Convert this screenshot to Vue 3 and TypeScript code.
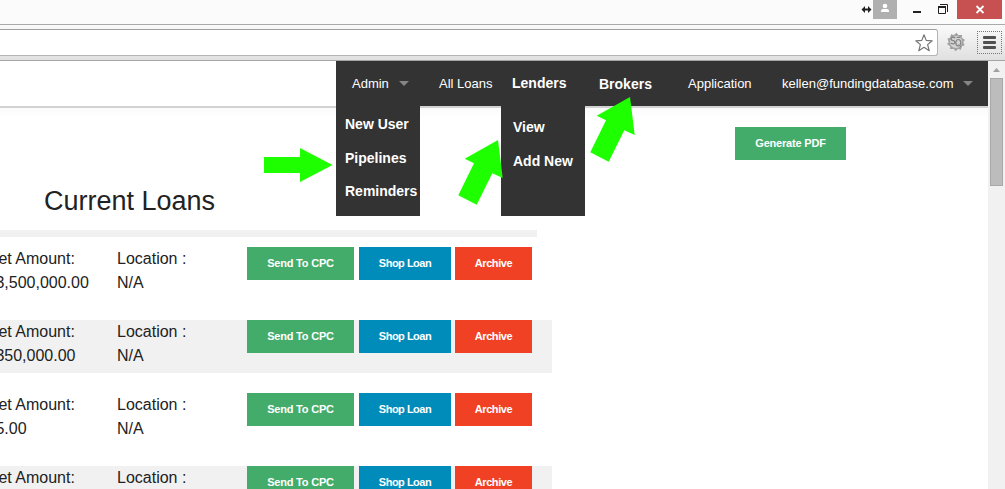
<script setup lang="ts">
interface NavItem { label: string; bold?: boolean; caret?: boolean }
interface Loan { amount: string; shaded: boolean }

const nav: NavItem[] = [
  { label: 'Admin', caret: true },
  { label: 'All Loans' },
  { label: 'Lenders', bold: true },
  { label: 'Brokers', bold: true },
  { label: 'Application' },
  { label: 'kellen@fundingdatabase.com', caret: true },
]
const adminMenu: string[] = ['New User', 'Pipelines', 'Reminders']
const lenderMenu: string[] = ['View', 'Add New']
const loans: Loan[] = [
  { amount: '3,500,000.00', shaded: false },
  { amount: '350,000.00', shaded: true },
  { amount: '5.00', shaded: false },
  { amount: '', shaded: true },
]
const gearTeeth: number[] = [0, 36, 72, 108, 144, 180, 216, 252, 288, 324]
</script>

<template>
  <div class="window">
    <div class="titlebar">
      <svg class="resize" width="12" height="9" viewBox="0 0 12 9"><path d="M2 4.500H9" fill="none" stroke="#222" stroke-width="2" /><path d="M0.500 4.500L4 1V8ZM10.500 4.500L7 1V8Z" fill="#222" /></svg>
      <div class="profile">
        <svg width="24" height="19" viewBox="0 0 24 19"><circle cx="12" cy="6" r="2.300" fill="#fff" /><path d="M8 12V10.800Q8 9 10 9H14Q16 9 16 10.800V12Z" fill="#fff" /></svg>
      </div>
      <svg class="controls" width="60" height="19" viewBox="0 0 60 19">
        <path d="M16 12H24" stroke="#222" stroke-width="2" />
        <path d="M43 4.500H50.500V12" fill="none" stroke="#222" />
        <path d="M41.500 6.500H48.500V13.500H41.500Z" fill="none" stroke="#222" />
        <path d="M41 7H49" stroke="#222" stroke-width="2" />
      </svg>
      <div class="close">
        <svg width="45" height="19" viewBox="0 0 45 19"><path d="M19.500 6L26.500 13M26.500 6L19.500 13" stroke="#fff" stroke-width="1.800" /></svg>
      </div>
    </div>

    <div class="toolbar">
      <div class="omnibox">
        <svg width="20" height="20" viewBox="0 0 20 20"><path d="M10 1.800L12.200 7.400L18.200 7.800L13.600 11.600L15.200 17.700L10 14.300L4.800 17.700L6.400 11.600L1.800 7.800L7.800 7.400Z" fill="#fff" stroke="#777" stroke-width="1.200" stroke-linejoin="round" /></svg>
      </div>
      <svg class="extension" width="20" height="20" viewBox="0 0 20 20">
        <path v-for="t in gearTeeth" :key="t" d="M7 3.500L10.800 0.800L12.500 4Z" fill="#a0a0a0" :transform="`rotate(${t} 10 10)`" />
        <circle cx="10" cy="10" r="6.500" fill="#d4d4d4" stroke="#a0a0a0" />
        <path d="M9.200 6.200Q8 4.800 6 5.500Q4.300 6.800 5.800 8.200Q9.200 9 9 10.800Q8 12.600 4.800 11.200" fill="none" stroke="#858585" stroke-width="1.300" />
        <ellipse cx="12.300" cy="10.700" rx="2.500" ry="3.200" fill="none" stroke="#858585" stroke-width="1.200" />
        <path d="M12.500 12.500L15 15M10.500 5.500H14" stroke="#858585" />
      </svg>
      <div class="menu-button"><i></i><i></i><i></i></div>
    </div>

    <div class="viewport">
      <main class="page">
        <header class="header">
          <nav class="nav">
            <a v-for="item in nav" :key="item.label" :class="{ bold: item.bold }">
              {{ item.label }}<span v-if="item.caret" class="caret"></span>
            </a>
            <div class="dropdown admin"><a v-for="m in adminMenu" :key="m">{{ m }}</a></div>
            <div class="dropdown lenders"><a v-for="m in lenderMenu" :key="m">{{ m }}</a></div>
          </nav>
        </header>

        <div class="content">
          <section class="loans">
            <h1>Current Loans</h1>
            <div class="divider"></div>
            <div v-for="(loan, i) in loans" :key="i" class="loan" :class="{ shaded: loan.shaded }">
              <div class="amount"><div class="label">et Amount:</div><div v-if="loan.amount" class="value">{{ loan.amount }}</div></div>
              <div class="location"><div>Location :</div><div v-if="loan.amount">N/A</div></div>
              <div class="actions">
                <button class="btn green send">Send To CPC</button>
                <button class="btn blue shop">Shop Loan</button>
                <button class="btn red archive">Archive</button>
              </div>
            </div>
          </section>
          <button class="btn green pdf">Generate PDF</button>
        </div>
      </main>

      <div class="scrollbar">
        <svg width="17" height="17" viewBox="0 0 17 17"><path d="M5 11L8.500 7L12 11Z" fill="#a0a0a0" /></svg>
        <div class="thumb"></div>
      </div>
    </div>

    <svg class="arrows" width="1005" height="489" viewBox="0 0 1005 489" fill="#1eff00">
      <path d="M264 157H300V148L332.500 165L300 182V173H264Z" />
      <path d="M498 140L502.700 178L492.300 173.300L476.700 204.700L458.300 195.300L474 163.300L464.700 158.700Z" />
      <path d="M630 97L634.700 135L624.300 130.300L608.700 161.700L590.300 152.300L606 120.300L596.700 115.700Z" />
    </svg>
  </div>
</template>

<style>
html, body { overflow: hidden; }
</style>

<style scoped>
* { box-sizing: border-box; }
.window { position: relative; width: 1005px; height: 489px; overflow: hidden; background: #fff; color: #222; font-family: "Liberation Sans", Arial, sans-serif; }
svg { display: block; flex: none; }
.titlebar { display: flex; align-items: flex-start; justify-content: flex-end; height: 25px; padding-right: 3px; background: #fbfbfb; border-bottom: 1px solid #aaa; }
.resize { margin: 5px 0 0 0; }
.profile { width: 24px; height: 19px; background: #b0b0b0; }
.close { width: 45px; height: 19px; background: #c75050; }
.toolbar { display: flex; align-items: flex-start; height: 36px; background: linear-gradient(#fafafa, #e0e0e0); border-bottom: 1px solid #a5a5a5; padding-top: 4px; }
.omnibox { display: flex; justify-content: flex-end; width: 938px; height: 27px; padding: 3px 3px 0 0; background: #fff; border: 1px solid #b5b5b5; border-top-color: #a0a0a0; border-left: 0; border-radius: 0 3px 3px 0; }
.extension { margin: 3px 0 0 8px; }
.menu-button { display: flex; flex-direction: column; align-items: center; gap: 2px; width: 25px; height: 23px; margin: 2px 0 0 11px; padding-top: 4px; border: 1px dotted #777; }
.menu-button i { width: 13px; height: 3px; border-radius: 1px; background: #505050; }
.viewport { display: flex; height: 428px; }
.page { width: 988px; }
.header { display: flex; justify-content: flex-end; height: 47px; border-bottom: 2px solid #d2d2d2; }
.nav { position: relative; display: grid; grid-template-columns: 87px 73px 87px 89px 94px 206px; width: 652px; height: 45px; padding-left: 16px; background: #333; color: #fff; font-size: 13px; line-height: 45px; white-space: nowrap; }
.nav .bold { font-size: 14px; font-weight: bold; line-height: 44px; }
.nav > a:nth-child(4) { line-height: 46px; }
.caret { display: inline-block; margin-left: 10px; border: 5px solid transparent; border-top-color: #858585; border-bottom: 0; vertical-align: 2px; }
.dropdown { position: absolute; top: 45px; display: flex; flex-direction: column; width: 84px; height: 110px; background: #333; font-size: 14px; font-weight: bold; line-height: 33.5px; }
.admin { left: 0; padding: 2px 0 0 9px; }
.lenders { left: 165px; padding: 5px 0 0 12px; }
.content { display: flex; align-items: flex-start; background: linear-gradient(#fafafa, #fff 10px); }
.loans { width: 552px; }
h1 { height: 122px; margin: 0; padding: 74px 0 0 44px; font-size: 27px; font-weight: normal; line-height: 38px; }
.divider { width: 537px; height: 7px; margin-bottom: 10px; background: #f1f1f1; }
.loan { display: flex; width: 552px; height: 53px; margin-bottom: 20px; font-size: 16px; line-height: 24px; }
.shaded { background: #f1f1f1; }
.amount { width: 117px; white-space: nowrap; }
.label { margin-left: -1.6px; }
.value { margin-left: -4.6px; }
.location { width: 130px; }
.actions { display: flex; }
.btn { height: 33px; margin: 0; padding: 0; border: 0; color: #fff; font: bold 11px/33px "Liberation Sans", Arial, sans-serif; letter-spacing: -0.2px; text-align: center; white-space: nowrap; }
.green { background: #43ac6a; }
.blue { background: #008cba; }
.red { background: #f04124; }
.send { width: 107px; }
.shop { width: 92px; margin-left: 5px; letter-spacing: -0.5px; }
.archive { width: 77px; margin-left: 4px; letter-spacing: -0.4px; }
.pdf { width: 111px; margin: 19px 0 0 183px; }
.scrollbar { display: flex; flex-direction: column; align-items: center; width: 17px; background: #f1f1f1; }
.thumb { width: 13px; height: 108px; background: #bcbcbc; border: 1px solid #a8a8a8; }
.arrows { position: absolute; inset: 0; pointer-events: none; }
</style>
